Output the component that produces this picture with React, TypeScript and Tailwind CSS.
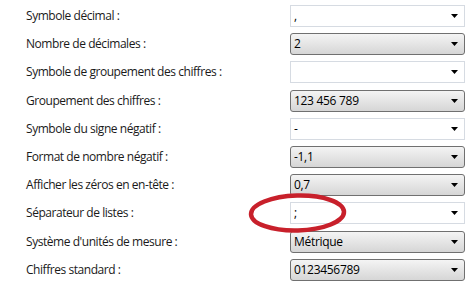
const rows: { label: string; value: string; editable: boolean }[] = [
  { label: 'Symbole décimal :', value: ',', editable: true },
  { label: 'Nombre de décimales :', value: '2', editable: false },
  { label: 'Symbole de groupement des chiffres :', value: '', editable: true },
  { label: 'Groupement des chiffres :', value: '123 456 789', editable: false },
  { label: 'Symbole du signe négatif :', value: '-', editable: true },
  { label: 'Format de nombre négatif :', value: '-1,1', editable: false },
  { label: 'Afficher les zéros en en-tête :', value: '0,7', editable: false },
  { label: 'Séparateur de listes :', value: ';', editable: true },
  { label: "Système d'unités de mesure :", value: 'Métrique', editable: false },
  { label: 'Chiffres standard :', value: '0123456789', editable: false },
];

function Arrow() {
  return (
    <svg width="7" height="4" viewBox="0 0 7 4" className="shrink-0">
      <path d="M0 0h7L3.5 4z" fill="#000" />
    </svg>
  );
}

function Combo({ value, editable }: { value: string; editable: boolean }) {
  return (
    <div
      className={`flex items-center w-[175px] h-[22px] pl-[3px] pr-[6px] text-[12px] text-black tracking-[-0.3px] ${
        editable
          ? 'bg-white border border-[#d6dbe2]'
          : 'rounded-[3px] border border-[#707070] bg-gradient-to-b from-[#f4f4f4] to-[#d6d6d6]'
      }`}
    >
      <span className="flex-1 truncate">{value}</span>
      <Arrow />
    </div>
  );
}

export default function App() {
  return (
    <div
      className="relative w-[471px] h-[287px] bg-white overflow-hidden pt-[2px] pl-[26px]"
      style={{ fontFamily: '"Open Sans", "Noto Sans", sans-serif' }}
    >
      {rows.map((r) => (
        <div key={r.label} className="flex items-center h-[28.2px]">
          <span className="w-[264px] text-[12px] text-[#1a1a1a] tracking-[-0.45px]">{r.label}</span>
          <Combo value={r.value} editable={r.editable} />
        </div>
      ))}

      {/* red highlight round the list separator */}
      <svg className="absolute left-[246px] top-[191px]" width="104" height="44" viewBox="0 0 104 44">
        <ellipse cx="51.5" cy="22" rx="46.5" ry="17.5" fill="none" stroke="#c8202b" strokeWidth="4.5" transform="rotate(-1.5 51.5 22)" />
      </svg>
    </div>
  );
}
